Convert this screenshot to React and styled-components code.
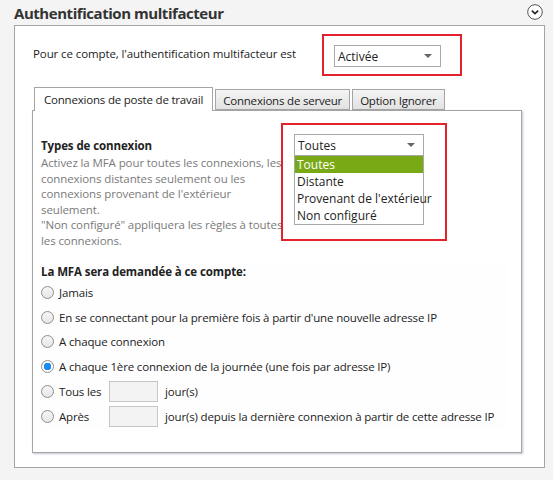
import React from 'react'
import styled, { createGlobalStyle } from 'styled-components'

const GlobalStyle = createGlobalStyle`
  html, body {
    margin: 0;
    padding: 0;
    background: #f4f4f4;
  }
  body {
    font-family: 'Open Sans', 'Noto Sans', sans-serif;
    font-size: 12px;
    color: #222;
  }
`

const Page = styled.div`
  width: 553px;
  height: 480px;
  background: #f4f4f4;
  overflow: hidden;
`

const TitleBar = styled.div`
  height: 25px;
  display: flex;
  align-items: center;
  justify-content: space-between;
  padding: 0 10px 0 14px;
`

const Title = styled.h1`
  margin: 0;
  font-size: 15px;
  font-weight: 700;
  color: #333;
  letter-spacing: -0.45px;
`

const Collapse = styled.span`
  width: 16px;
  height: 16px;
  display: flex;
  margin-top: -2px;
`

const Panel = styled.div`
  margin-left: 14px;
  width: 531px;
  height: 443px;
  box-sizing: border-box;
  background: #fff;
  border: 1px solid #a4a4a4;
  padding: 8px 0 0 18px;
`

const TopRow = styled.div`
  display: flex;
  align-items: center;
  height: 42px;
`

const TopLabel = styled.div`
  width: 289px;
  font-size: 11.5px;
  letter-spacing: -0.1px;
  padding-bottom: 4px;
`

const RedFrame = styled.div`
  border: 2px solid #e4222c;
  background: #fff;
  box-sizing: border-box;
  width: ${p => p.$w}px;
  height: ${p => p.$h}px;
  padding: ${p => p.$pad};
`

const SelectBox = styled.div`
  width: ${p => p.$w}px;
  height: ${p => p.$h}px;
  box-sizing: border-box;
  border: 1px solid #a9a9a9;
  background: #fff;
  display: flex;
  align-items: center;
  justify-content: space-between;
  padding: 0 8px 0 3px;
  font-size: 12px;
  color: #222;
`

const Caret = styled.span`
  width: 0;
  height: 0;
  border-left: 4px solid transparent;
  border-right: 4px solid transparent;
  border-top: 4px solid #666;
`

const Tabs = styled.div`
  display: flex;
  align-items: flex-end;
  margin-top: 11px;
  gap: 2px;
  height: 23px;
  position: relative;
  z-index: 1;
`

const Tab = styled.div`
  box-sizing: border-box;
  height: ${p => (p.$active ? 24 : 21)}px;
  margin-bottom: ${p => (p.$active ? -1 : 0)}px;
  padding: 0 ${p => (p.$active ? 9 : 7)}px;
  margin-left: ${p => (p.$first ? 1 : 0)}px;
  display: flex;
  align-items: center;
  border: 1px solid #a4a4a4;
  border-bottom: ${p => (p.$active ? 'none' : '1px solid #a4a4a4')};
  background: ${p => (p.$active ? '#fff' : 'linear-gradient(#f4f4f4, #e2e2e2)')};
  font-size: 11.5px;
  letter-spacing: -0.2px;
  color: #222;
  padding-top: ${p => (p.$active ? 0 : 1)}px;
`

const TabPanel = styled.div`
  position: relative;
  margin-left: -1px;
  width: 490px;
  height: 343px;
  box-sizing: border-box;
  border: 1px solid #a4a4a4;
  box-shadow: 1px 1px 2px rgba(120, 120, 160, 0.45);
  background: #fff;
  padding: 27px 0 0 8px;
`

const SectionTitle = styled.div`
  font-weight: 700;
  font-size: 11.5px;
  color: #222;
  line-height: 16px;
  letter-spacing: -0.1px;
`

const Description = styled.div`
  color: #7a7a7a;
  font-size: 11.5px;
  line-height: 15.5px;
  letter-spacing: -0.1px;
  white-space: nowrap;
  margin-top: 1px;
`

const TypeOverlay = styled(RedFrame)`
  position: absolute;
  left: 248px;
  top: 12px;
`

const OptionList = styled.div`
  width: 130px;
  border: 1px solid #a9a9a9;
  border-top: none;
  box-sizing: border-box;
  background: #fff;
`

const OptionItem = styled.div`
  height: 17px;
  line-height: 17px;
  padding-left: 2px;
  font-size: 12px;
  white-space: nowrap;
  color: ${p => (p.$selected ? '#fff' : '#222')};
  background: ${p => (p.$selected ? '#7aa916' : 'transparent')};
`

const AskSection = styled.div`
  margin-top: 16px;
  margin-right: 14px;
  background: #fefefe;
`

const RadioList = styled.div`
  display: flex;
  flex-direction: column;
`

const RadioRow = styled.label`
  display: flex;
  align-items: center;
  height: 24.8px;
  font-size: 11.5px;
  letter-spacing: -0.15px;
  color: #222;
  white-space: nowrap;
`

const RadioDot = styled.span`
  width: 11px;
  height: 11px;
  border-radius: 50%;
  border: 1px solid #8e8e8e;
  background: ${p => (p.$checked ? 'radial-gradient(circle, #1a8cf0 0 3.5px, #fff 4px)' : 'linear-gradient(#f6f6f6, #e6e6e6)')};
  margin-right: 5px;
  flex: none;
`

const RadioText = styled.span`
  width: ${p => (p.$w ? `${p.$w}px` : 'auto')};
`

const DayInput = styled.span`
  width: 49px;
  height: 21px;
  box-sizing: border-box;
  border: 1px solid #c6c6c6;
  background: #f3f3f3;
  margin-right: 7px;
`

function ChevronCircle() {
  return (
    <svg width="16" height="16" viewBox="0 0 16 16">
      <circle cx="8" cy="8" r="7.3" fill="#fff" stroke="#555" strokeWidth="1" />
      <path d="M4.8 6.6 L8 9.6 L11.2 6.6" fill="none" stroke="#222" strokeWidth="1.6" />
    </svg>
  )
}

export default function App() {
  const options = ['Toutes', 'Distante', "Provenant de l'extérieur", 'Non configuré']

  return (
    <Page>
      <GlobalStyle />
      <TitleBar>
        <Title>Authentification multifacteur</Title>
        <Collapse><ChevronCircle /></Collapse>
      </TitleBar>
      <Panel>
        <TopRow>
          <TopLabel>Pour ce compte, l'authentification multifacteur est</TopLabel>
          <RedFrame $w={140} $h={42} $pad="9px 0 0 10px">
            <SelectBox $w={107} $h={22}>
              <span>Activée</span>
              <Caret />
            </SelectBox>
          </RedFrame>
        </TopRow>

        <Tabs>
          <Tab $active $first>Connexions de poste de travail</Tab>
          <Tab>Connexions de serveur</Tab>
          <Tab>Option Ignorer</Tab>
        </Tabs>

        <TabPanel>
          <SectionTitle>Types de connexion</SectionTitle>
          <Description>
            Activez la MFA pour toutes les connexions, les<br />
            connexions distantes seulement ou les<br />
            connexions provenant de l'extérieur<br />
            seulement.<br />
            "Non configuré" appliquera les règles à toutes<br />
            les connexions.
          </Description>

          <TypeOverlay $w={166} $h={118} $pad="9px 0 0 11px">
            <SelectBox $w={130} $h={22}>
              <span>Toutes</span>
              <Caret />
            </SelectBox>
            <OptionList>
              {options.map((o, i) => (
                <OptionItem key={o} $selected={i === 0}>{o}</OptionItem>
              ))}
            </OptionList>
          </TypeOverlay>

          <AskSection>
            <SectionTitle>La MFA sera demandée à ce compte:</SectionTitle>
            <RadioList>
              <RadioRow><RadioDot />Jamais</RadioRow>
              <RadioRow><RadioDot />En se connectant pour la première fois à partir d'une nouvelle adresse IP</RadioRow>
              <RadioRow><RadioDot />A chaque connexion</RadioRow>
              <RadioRow><RadioDot $checked />A chaque 1ère connexion de la journée (une fois par adresse IP)</RadioRow>
              <RadioRow>
                <RadioDot />
                <RadioText $w={50}>Tous les</RadioText>
                <DayInput />
                jour(s)
              </RadioRow>
              <RadioRow>
                <RadioDot />
                <RadioText $w={50}>Après</RadioText>
                <DayInput />
                jour(s) depuis la dernière connexion à partir de cette adresse IP
              </RadioRow>
            </RadioList>
          </AskSection>
        </TabPanel>
      </Panel>
    </Page>
  )
}
